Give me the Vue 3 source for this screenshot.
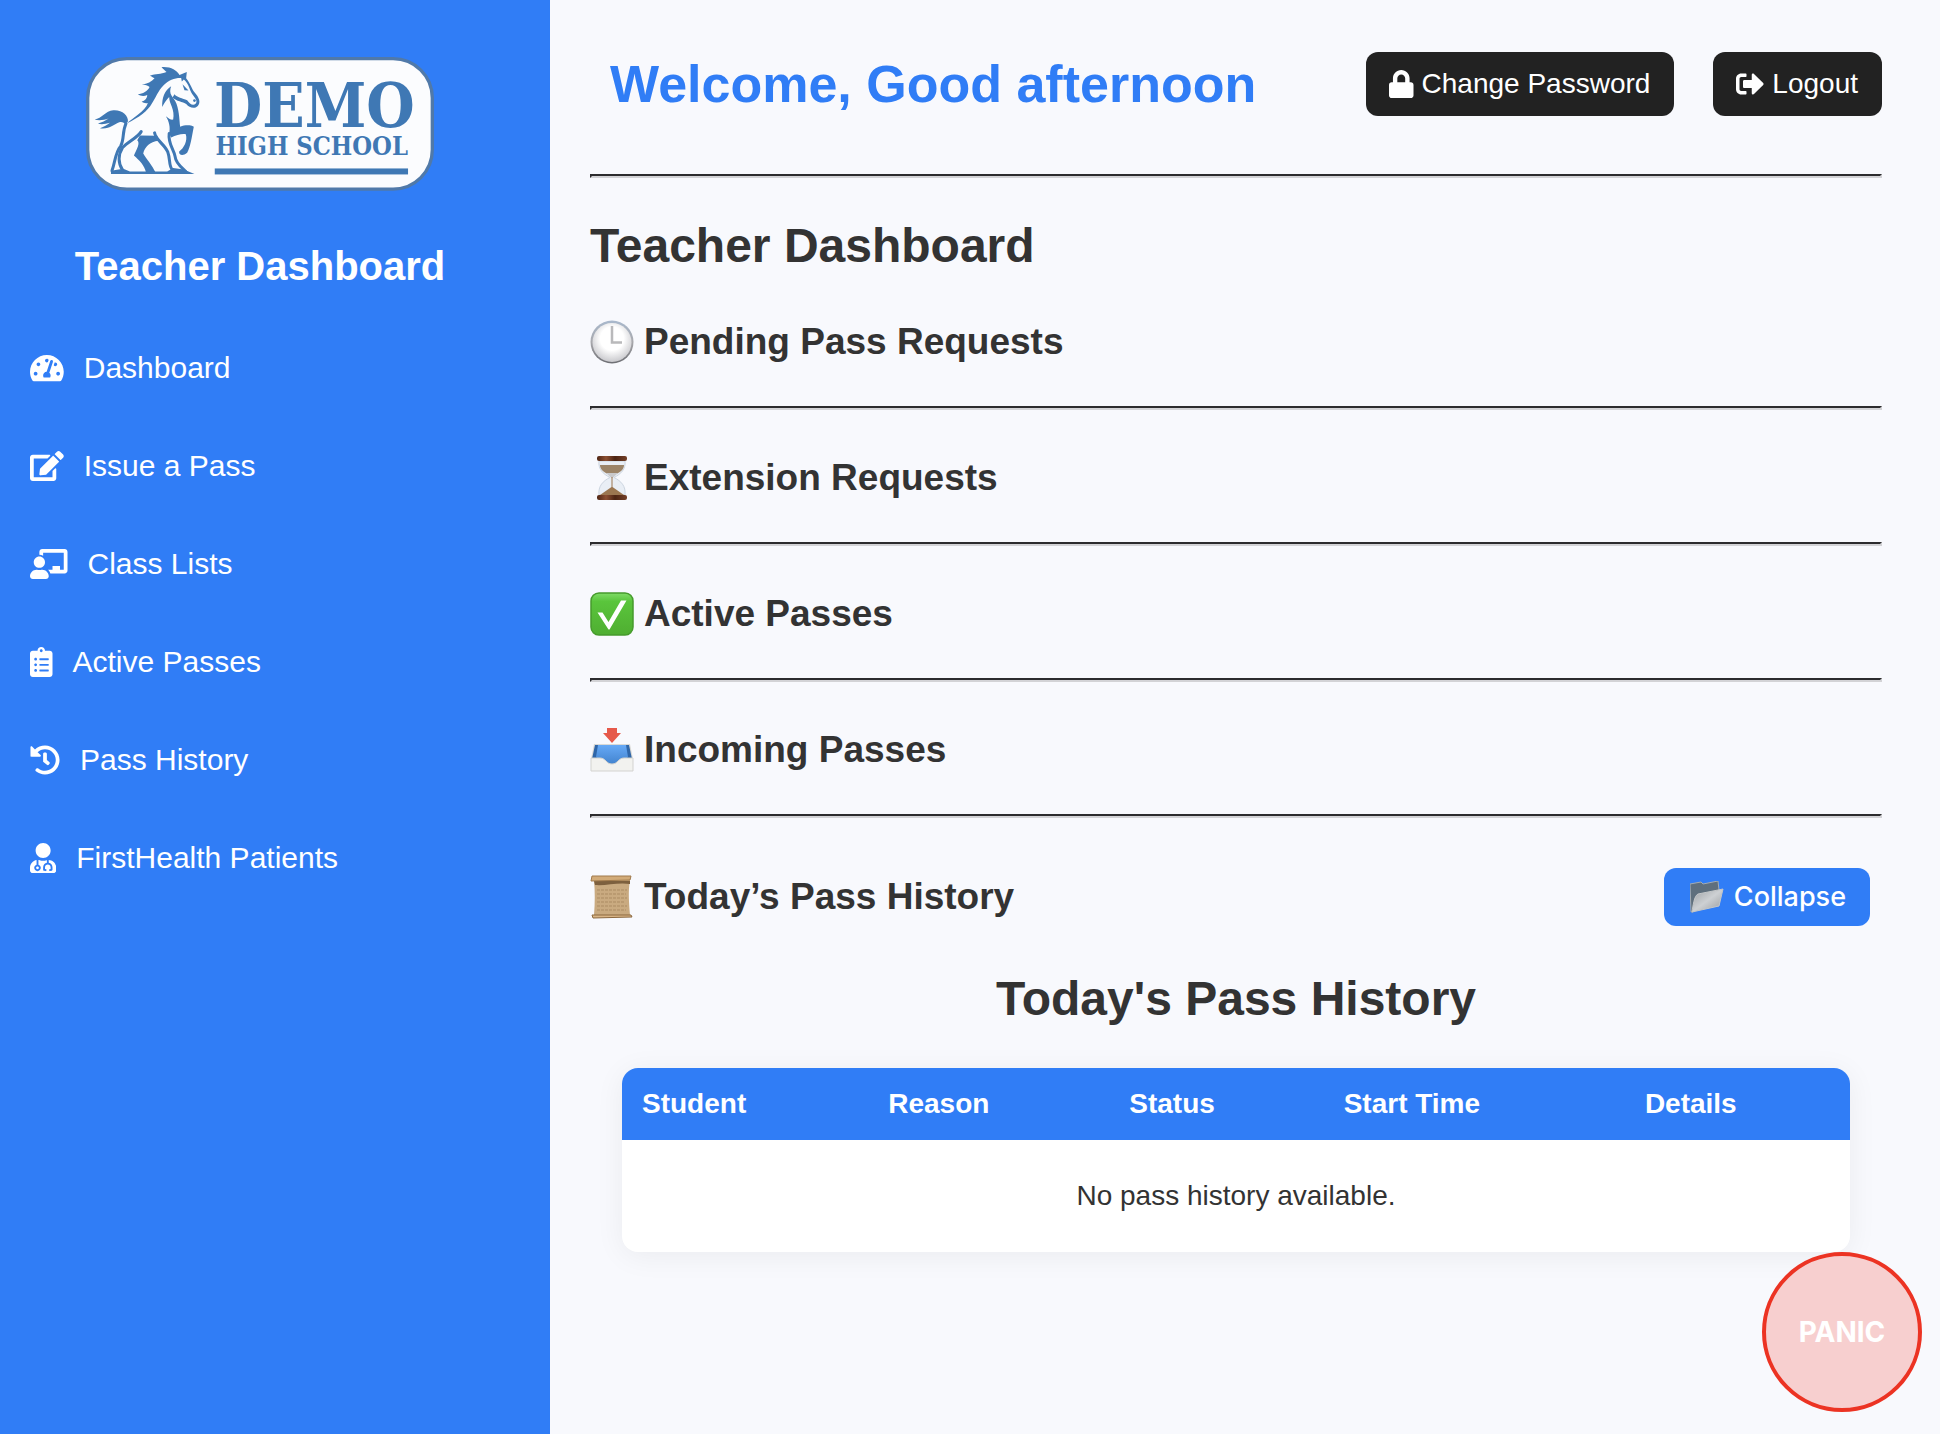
<template>
  <div class="layout">
    <aside class="sidebar">
      <svg class="logo" viewBox="78 50 1046 402" role="img" aria-label="Demo High School">
        <rect x="83" y="55" width="1036" height="392" rx="118" fill="#fbfcfe" stroke="#5079a9" stroke-width="10"/>
        <g fill="#3f78b4">
          <!-- tail and mane -->
          <path d="M104 238C126 234 136 212 160 210C186 208 206 226 204 244L196 252C190 246 186 244 178 246C162 252 148 268 120 264C132 260 142 254 150 248C136 252 122 254 114 250C126 247 136 242 146 235C132 240 116 242 104 238Z"/>
          <path d="M305 80C332 78 350 88 359 104L381 95L379 114C392 130 396 146 404 156C418 172 424 186 414 197C404 207 388 202 380 192C368 184 350 184 338 172L344 162C352 172 368 174 382 180C390 192 400 198 408 190C416 180 400 168 394 156C388 142 384 128 372 118L366 124L364 113C346 112 326 120 312 134C294 152 288 172 276 190C264 212 238 232 200 250C220 232 256 212 264 188C258 190 250 188 245 184C255 181 262 174 262 164C252 169 241 167 234 162C248 161 264 152 269 140C264 136 256 133 246 133C262 131 276 124 284 114C276 110 276 108 270 106C288 100 302 102 320 95C314 90 310 86 305 80Z"/>
          <path d="M368 132L386 151L374 150Z"/>
          <circle cx="404" cy="181" r="4"/>
          <!-- chest and raised leg -->
          <path d="M334 138C314 150 306 174 307 200C314 186 322 176 328 170C328 192 346 206 340 238C334 240 326 234 318 228C328 244 332 262 328 280L334 292C350 284 366 280 378 282C384 302 372 324 358 334C356 344 368 350 382 338C392 322 396 290 402 260C392 254 376 254 361 260C358 234 358 204 346 182L335 166C330 158 330 148 334 138Z"/>
          <path d="M240 286L292 287L296 302C270 304 254 322 250 340C260 358 278 376 286 396L258 396C254 376 238 360 222 346C230 328 242 308 232 300Z"/>
          <path d="M153 392L190 386L210 394L258 394L270 384L286 394L322 394L340 384L372 388L404 402L153 402Z"/>
        </g>
        <g fill="none" stroke="#3f78b4" stroke-width="9" stroke-linecap="round">
          <path d="M198 250C186 276 194 296 182 318C166 336 166 364 156 392"/>
          <path d="M244 274C236 290 206 304 188 322C174 344 174 370 188 390"/>
          <path d="M284 278C288 300 314 312 324 336C332 358 326 378 338 390"/>
          <path d="M328 280C324 312 342 326 346 350C348 370 366 382 378 394"/>
        </g>
        <text class="logo-text">
          <tspan class="logo-name" x="463" y="260">DEMO</tspan>
          <tspan class="logo-sub" x="467" y="346">HIGH SCHOOL</tspan>
        </text>
        <rect x="465" y="385" width="581" height="18" fill="#3f78b4"/>
      </svg>

      <h2 class="sidebar-title">Teacher Dashboard</h2>

      <nav class="nav">
        <a v-for="item in navItems" :key="item.label" href="#" class="nav-link">
          <svg class="icon" :viewBox="`0 0 ${item.width} 512`" fill="currentColor" aria-hidden="true">
            <path :d="item.path"/>
          </svg>
          <span>{{ item.label }}</span>
        </a>
      </nav>
    </aside>

    <main class="main">
      <header class="topbar">
        <h1 class="welcome">Welcome, Good afternoon</h1>
        <div class="actions">
          <button type="button" class="btn-dark">
            <svg class="icon" viewBox="0 0 448 512" fill="currentColor" aria-hidden="true">
              <path d="M400 224h-24v-72C376 68.2 307.8 0 224 0S72 68.2 72 152v72H48c-26.5 0-48 21.5-48 48v192c0 26.5 21.5 48 48 48h352c26.5 0 48-21.5 48-48V272c0-26.5-21.5-48-48-48zm-104 0H152v-72c0-39.7 32.3-72 72-72s72 32.3 72 72v72z"/>
            </svg>
            Change Password
          </button>
          <button type="button" class="btn-dark">
            <svg class="icon" viewBox="0 0 512 512" fill="currentColor" aria-hidden="true">
              <path d="M497 273L329 441c-15 15-41 4.5-41-17v-96H152c-13.3 0-24-10.7-24-24v-96c0-13.3 10.7-24 24-24h136V88c0-21.4 25.9-32 41-17l168 168c9.3 9.4 9.3 24.6 0 34zM192 436v-40c0-6.6-5.4-12-12-12H96c-17.7 0-32-14.3-32-32V160c0-17.7 14.3-32 32-32h84c6.6 0 12-5.4 12-12V76c0-6.6-5.4-12-12-12H96c-53 0-96 43-96 96v192c0 53 43 96 96 96h84c6.6 0 12-5.4 12-12z"/>
            </svg>
            Logout
          </button>
        </div>
      </header>

      <hr class="divider">
      <h2 class="page-title">Teacher Dashboard</h2>

      <section class="block">
        <h3 class="block-title">
          <svg class="emoji" viewBox="0 0 44 44" aria-hidden="true">
            <defs>
              <linearGradient id="clockRim" x1="0" y1="0" x2="0" y2="1">
                <stop offset="0" stop-color="#a9b9cd"/>
                <stop offset="0.5" stop-color="#a8a8ac"/>
                <stop offset="1" stop-color="#6d6e73"/>
              </linearGradient>
              <radialGradient id="clockFace" cx="0.5" cy="0.4" r="0.6">
                <stop offset="0.5" stop-color="#ffffff"/>
                <stop offset="1" stop-color="#c9c9cd"/>
              </radialGradient>
            </defs>
            <circle cx="22" cy="22" r="21.5" fill="url(#clockRim)"/>
            <circle cx="22" cy="22.5" r="19.5" fill="url(#clockFace)"/>
            <path d="M22 6V22.5H32" fill="none" stroke="#b9b9bb" stroke-width="2.5"/>
          </svg>
          Pending Pass Requests
        </h3>
      </section>
      <hr class="divider">

      <section class="block">
        <h3 class="block-title">
          <svg class="emoji" viewBox="0 0 44 44" aria-hidden="true">
            <defs>
              <linearGradient id="wood" x1="0" y1="0" x2="1" y2="0">
                <stop offset="0" stop-color="#4e2514"/>
                <stop offset="0.3" stop-color="#8c4f32"/>
                <stop offset="0.6" stop-color="#4c2413"/>
                <stop offset="1" stop-color="#744028"/>
              </linearGradient>
            </defs>
            <path d="M9 5H35C36 13 31 18 24 21.5C31 25 36 30 35 39H9C8 30 13 25 20 21.5C13 18 8 13 9 5Z" fill="#e9eef5" stroke="#ccd5e0"/>
            <path d="M10 9H34C34 13 31 16 26 18H18C13 16 10 13 10 9Z" fill="#9c8468"/>
            <path d="M16 17H28L22.5 22H21.5Z" fill="#c9c9cb"/>
            <path d="M21.5 21H22.5V31L34 39H10L21.5 31Z" fill="#9b7650"/>
            <rect x="7" y="0" width="30" height="5" rx="2" fill="url(#wood)"/>
            <rect x="7" y="39" width="30" height="5" rx="2" fill="url(#wood)"/>
          </svg>
          Extension Requests
        </h3>
      </section>
      <hr class="divider">

      <section class="block">
        <h3 class="block-title">
          <svg class="emoji" viewBox="0 0 44 44" aria-hidden="true">
            <defs>
              <linearGradient id="checkBox" x1="0" y1="0" x2="0" y2="1">
                <stop offset="0" stop-color="#7fdc66"/>
                <stop offset="0.2" stop-color="#5ac53c"/>
                <stop offset="1" stop-color="#4fae31"/>
              </linearGradient>
            </defs>
            <rect x="1" y="1" width="42" height="42" rx="8" fill="url(#checkBox)" stroke="#469b2c" stroke-width="1.5"/>
            <path d="M7.5 20.5H12.5L18.5 30L31 8.5H36.5L19.5 37.5H18.5Z" fill="#fff"/>
          </svg>
          Active Passes
        </h3>
      </section>
      <hr class="divider">

      <section class="block">
        <h3 class="block-title">
          <svg class="emoji" viewBox="0 0 44 44" aria-hidden="true">
            <defs>
              <linearGradient id="trayInner" x1="0" y1="0" x2="0" y2="1">
                <stop offset="0" stop-color="#66a9f6"/>
                <stop offset="1" stop-color="#3f80cb"/>
              </linearGradient>
            </defs>
            <path d="M4 16H40L43 31V43H1V31Z" fill="#d9d9d6"/>
            <path d="M5 17H39L42 31L30 38H14L2 31Z" fill="#2f66a8"/>
            <path d="M8 17H36L38 29L28 38H16L6 29Z" fill="url(#trayInner)"/>
            <path d="M1 30H10C16 30 16 36 22 36S28 30 34 30H43V43H1Z" fill="#f2f2ef" stroke="#d3d3d0"/>
            <path d="M17 0H27V5H31L22 15L13 5H17Z" fill="#e6594a"/>
          </svg>
          Incoming Passes
        </h3>
      </section>
      <hr class="divider">

      <div class="history-bar">
        <h3 class="block-title">
          <svg class="emoji" viewBox="0 0 44 44" aria-hidden="true">
            <path d="M4 5H40C38 16 39 28 40 40H4C5 28 5 16 4 5Z" fill="#c9aa80"/>
            <path d="M4 6H40V9C28 7 16 11 5 10Z" fill="#7d603e"/>
            <path d="M2 1H41L40 5L1 6Z" fill="#d2ab78" stroke="#a07a4c"/>
            <path d="M2 40H41L42 42L3 43Z" fill="#d9b586" stroke="#8b683f"/>
            <path d="M7 15H37M7 19H36M7 23H37M7 27H34M7 31H37M7 35H36" stroke="#ab8b62" stroke-dasharray="3 1"/>
          </svg>
          Today’s Pass History
        </h3>
        <button type="button" class="btn-collapse" @click="open = !open">
          <svg class="folder" viewBox="0 0 34 32" aria-hidden="true">
            <defs>
              <linearGradient id="folderFront" x1="0" y1="0" x2="1" y2="1">
                <stop offset="0" stop-color="#9b9fa3"/>
                <stop offset="0.5" stop-color="#cdd0d3"/>
                <stop offset="1" stop-color="#96999c"/>
              </linearGradient>
            </defs>
            <path d="M0 3L11 1L13 3L28 0L29 9L3 31L1 31Z" fill="#5f6f7d" stroke="#a4abb1"/>
            <path d="M8 13L33 8L29 25L2 31C3 25 4 15 8 13Z" fill="url(#folderFront)" stroke="#c3c6c8"/>
          </svg>
          {{ open ? 'Collapse' : 'Expand' }}
        </button>
      </div>

      <section v-if="open" class="history">
        <h2 class="history-title">Today's Pass History</h2>
        <table class="history-table">
          <thead>
            <tr>
              <th v-for="col in columns" :key="col" scope="col">{{ col }}</th>
            </tr>
          </thead>
          <tbody>
            <tr>
              <td :colspan="columns.length">No pass history available.</td>
            </tr>
          </tbody>
        </table>
      </section>
    </main>

    <button type="button" class="panic">PANIC</button>
  </div>
</template>

<script setup>
import { ref } from 'vue'

const open = ref(true)

const columns = ['Student', 'Reason', 'Status', 'Start Time', 'Details']

const navItems = [
  {
    label: 'Dashboard',
    width: 576,
    path: 'M288 32C128.94 32 0 160.94 0 320c0 52.8 14.25 102.26 39.06 144.8 5.61 9.62 16.3 15.2 27.44 15.2h443c11.14 0 21.83-5.58 27.44-15.2C561.75 422.26 576 372.8 576 320c0-159.06-128.94-288-288-288zm0 64c14.71 0 26.58 10.13 30.32 23.65-1.11 2.26-2.64 4.23-3.45 6.67l-9.22 27.67c-5.13 3.49-10.97 6.01-17.64 6.01-17.67 0-32-14.33-32-32S270.33 96 288 96zM96 384c-17.67 0-32-14.33-32-32s14.33-32 32-32 32 14.33 32 32-14.33 32-32 32zm48-160c-17.67 0-32-14.33-32-32s14.33-32 32-32 32 14.33 32 32-14.33 32-32 32zm246.77-72.41l-61.33 184C343.13 347.33 352 364.54 352 384c0 11.72-3.38 22.55-8.88 32H232.88c-5.5-9.45-8.88-20.28-8.88-32 0-33.94 26.5-61.43 59.9-63.59l61.34-184.01c4.17-12.56 17.73-19.45 30.36-15.17 12.57 4.19 19.35 17.79 15.17 30.36zm14.66 57.2l15.52-46.55c3.47-1.29 7.13-2.23 11.05-2.23 17.67 0 32 14.33 32 32s-14.33 32-32 32c-11.38-.01-20.89-6.28-26.57-15.22zM480 384c-17.67 0-32-14.33-32-32s14.33-32 32-32 32 14.33 32 32-14.33 32-32 32z'
  },
  {
    label: 'Issue a Pass',
    width: 576,
    path: 'M402.6 83.2l90.2 90.2c3.8 3.8 3.8 10 0 13.8L274.4 405.6l-92.8 10.3c-12.4 1.4-22.9-9.1-21.5-21.5l10.3-92.8L388.8 83.2c3.8-3.8 10-3.8 13.8 0zm162-22.9l-48.8-48.8c-15.2-15.2-39.9-15.2-55.2 0l-35.4 35.4c-3.8 3.8-3.8 10 0 13.8l90.2 90.2c3.8 3.8 10 3.8 13.8 0l35.4-35.4c15.2-15.3 15.2-40 0-55.2zM384 346.2V448H64V128h229.8c3.2 0 6.2-1.3 8.5-3.5l40-40c7.6-7.6 2.2-20.5-8.5-20.5H48C21.5 64 0 85.5 0 112v352c0 26.5 21.5 48 48 48h352c26.5 0 48-21.5 48-48V306.2c0-10.7-12.9-16-20.5-8.5l-40 40c-2.2 2.3-3.5 5.3-3.5 8.5z'
  },
  {
    label: 'Class Lists',
    width: 640,
    path: 'M208 352c-2.39 0-4.78.35-7.06 1.09C187.98 357.3 174.35 360 160 360c-14.35 0-27.98-2.7-40.95-6.91-2.28-.74-4.66-1.09-7.05-1.09C49.94 352-.33 402.48 0 464.62.14 490.88 21.73 512 48 512h224c26.27 0 47.86-21.12 48-47.38.33-62.14-49.94-112.62-112-112.62zm-48-32c53.02 0 96-42.98 96-96s-42.98-96-96-96-96 42.98-96 96 42.98 96 96 96zM592 0H208c-26.47 0-48 22.25-48 49.59V96c23.42 0 45.1 6.78 64 17.8V64h352v288h-64v-64H384v64h-76.24c19.1 16.69 33.12 38.73 39.69 64H592c26.47 0 48-22.25 48-49.59V49.59C640 22.25 618.47 0 592 0z'
  },
  {
    label: 'Active Passes',
    width: 384,
    path: 'M336 64h-80c0-35.3-28.7-64-64-64s-64 28.7-64 64H48C21.5 64 0 85.5 0 112v352c0 26.5 21.5 48 48 48h288c26.5 0 48-21.5 48-48V112c0-26.5-21.5-48-48-48zM96 424c-13.3 0-24-10.7-24-24s10.7-24 24-24 24 10.7 24 24-10.7 24-24 24zm0-96c-13.3 0-24-10.7-24-24s10.7-24 24-24 24 10.7 24 24-10.7 24-24 24zm0-96c-13.3 0-24-10.7-24-24s10.7-24 24-24 24 10.7 24 24-10.7 24-24 24zm96-192c13.3 0 24 10.7 24 24s-10.7 24-24 24-24-10.7-24-24 10.7-24 24-24zm128 368c0 4.4-3.6 8-8 8H168c-4.4 0-8-3.6-8-8v-16c0-4.4 3.6-8 8-8h144c4.4 0 8 3.6 8 8v16zm0-96c0 4.4-3.6 8-8 8H168c-4.4 0-8-3.6-8-8v-16c0-4.4 3.6-8 8-8h144c4.4 0 8 3.6 8 8v16zm0-96c0 4.4-3.6 8-8 8H168c-4.4 0-8-3.6-8-8v-16c0-4.4 3.6-8 8-8h144c4.4 0 8 3.6 8 8v16z'
  },
  {
    label: 'Pass History',
    width: 512,
    path: 'M504 255.531c.253 136.64-111.18 248.372-247.82 248.468-59.015.042-113.223-20.53-155.822-54.911-11.077-8.94-11.905-25.541-1.839-35.607l11.267-11.267c8.609-8.609 22.353-9.551 31.891-1.984C173.062 425.135 212.781 440 256 440c101.705 0 184-82.311 184-184 0-101.705-82.311-184-184-184-48.814 0-93.149 18.969-126.068 49.932l50.754 50.754c10.08 10.08 2.941 27.314-11.313 27.314H24c-8.837 0-16-7.163-16-16V38.627c0-14.254 17.234-21.393 27.314-11.314l49.372 49.372C129.209 34.136 189.552 8 256 8c136.81 0 247.747 110.78 248 247.531zm-180.912 78.784l9.823-12.63c8.138-10.463 6.253-25.542-4.21-33.679L288 256.349V152c0-13.255-10.745-24-24-24h-16c-13.255 0-24 10.745-24 24v135.651l65.409 50.874c10.463 8.137 25.541 6.253 33.679-4.21z'
  },
  {
    label: 'FirstHealth Patients',
    width: 448,
    path: 'M224 256c70.7 0 128-57.3 128-128S294.7 0 224 0 96 57.3 96 128s57.3 128 128 128zM104 424c0 13.3 10.7 24 24 24s24-10.7 24-24-10.7-24-24-24-24 10.7-24 24zm216-135.4v49c36.5 7.4 64 39.8 64 78.4v41.7c0 7.6-5.4 14.2-12.9 15.7l-32.2 6.4c-4.3.9-8.5-1.9-9.4-6.3l-3.1-15.7c-.9-4.3 1.9-8.6 6.3-9.4l19.3-3.9V416c0-62.8-96-65.1-96 1.9v26.7l19.3 3.9c4.3.9 7.1 5.1 6.3 9.4l-3.1 15.7c-.9 4.3-5.1 7.1-9.4 6.3l-31.2-4.2c-7.9-1.1-13.8-7.8-13.8-15.9V416c0-38.6 27.5-70.9 64-78.4v-45.2c-2.2.7-4.4 1.1-6.6 1.9-18 6.3-37.3 9.8-57.4 9.8s-39.4-3.5-57.4-9.8c-7.4-2.6-14.9-4.2-22.6-5.2v81.6c23.1 6.9 40 28.1 40 53.4 0 30.9-25.1 56-56 56s-56-25.1-56-56c0-25.3 16.9-46.5 40-53.4v-80.4C48.5 301 0 355.8 0 422.4v44.8C0 491.9 20.1 512 44.8 512h358.4c24.7 0 44.8-20.1 44.8-44.8v-44.8c0-72-56.8-130.3-128-133.8z'
  }
]
</script>

<style>
body {
  margin: 0;
  background: #f8f9fd;
}
</style>

<style scoped>
.layout {
  display: flex;
  min-height: 100vh;
  font-family: "Liberation Sans", Arial, sans-serif;
  color: #333;
}

h1,
h2,
h3 {
  margin: 0;
}

.icon {
  height: 1em;
  flex-shrink: 0;
}

/* sidebar */
.sidebar {
  display: flex;
  flex-direction: column;
  flex: 0 0 550px;
  box-sizing: border-box;
  padding: 57px 60px 40px 30px;
  background: #307df6;
  color: #fff;
}

.logo {
  width: 348px;
  margin: 0 auto;
}

.logo-text {
  font-family: "DejaVu Serif Condensed", "DejaVu Serif", serif;
  font-weight: bold;
  fill: #3f78b4;
}

.logo-name {
  font-size: 186px;
}

.logo-sub {
  font-size: 76px;
}

.sidebar-title {
  margin: 51px 0 29px;
  font-size: 40px;
  line-height: 48px;
  text-align: center;
}

.nav-link {
  display: flex;
  align-items: center;
  gap: 20px;
  padding: 32px 0;
  font-size: 30px;
  line-height: 34px;
  color: #fff;
  text-decoration: none;
}

/* main column */
.main {
  flex: 1;
  min-width: 0;
  padding: 52px 58px 40px 40px;
}

.topbar {
  display: flex;
  align-items: center;
  justify-content: space-between;
  margin-bottom: 58px;
  padding-left: 20px;
}

.welcome {
  font-size: 52px;
  line-height: 60px;
  color: #307df6;
}

.actions {
  display: flex;
  gap: 39px;
}

.btn-dark,
.btn-collapse {
  display: flex;
  align-items: center;
  border: none;
  border-radius: 12px;
  font-size: 28px;
  line-height: 32px;
  color: #fff;
  cursor: pointer;
}

.btn-dark {
  gap: 8px;
  padding: 16px 24px 16px 23px;
  font-family: inherit;
  background: #222;
}

.divider {
  height: 0;
  margin: 0;
  border: 2px solid;
  border-color: #2c2c2e #d3d3d6 #d3d3d6 #2c2c2e;
}

.page-title {
  margin-top: 40px;
  font-size: 48px;
  line-height: 56px;
}

.block {
  padding: 46px 0 42px;
}

.block-title {
  display: flex;
  align-items: center;
  gap: 10px;
  font-size: 37px;
  line-height: 44px;
}

.emoji {
  width: 44px;
  height: 44px;
}

.history-bar {
  display: flex;
  align-items: center;
  justify-content: space-between;
  margin-top: 50px;
  padding-right: 12px;
}

.btn-collapse {
  gap: 10px;
  padding: 13px 24px 13px 26px;
  font-family: Inter, sans-serif;
  font-size: 27px;
  font-weight: 500;
  background: #307df6;
}

.folder {
  width: 34px;
  height: 32px;
}

.history {
  padding: 45px 32px 0;
}

.history-title {
  margin-bottom: 41px;
  font-size: 48px;
  line-height: 56px;
  text-align: center;
}

.history-table {
  width: 100%;
  border-collapse: collapse;
  border-radius: 16px;
  overflow: hidden;
  background: #fff;
  box-shadow: 0 4px 30px rgba(0, 0, 0, 0.06);
  font-size: 28px;
  line-height: 32px;
}

.history-table th {
  padding: 20px;
  background: #307df6;
  color: #fff;
  text-align: left;
}

.history-table td {
  padding: 40px 20px;
  text-align: center;
}

/* stays over the page content */
.panic {
  position: fixed;
  right: 18px;
  bottom: 22px;
  width: 160px;
  height: 160px;
  padding: 0;
  border: 4px solid #ec3323;
  border-radius: 50%;
  background: #f7cfcf;
  color: #fff;
  font-family: Inter, sans-serif;
  font-size: 28px;
  font-weight: bold;
  cursor: pointer;
}
</style>
